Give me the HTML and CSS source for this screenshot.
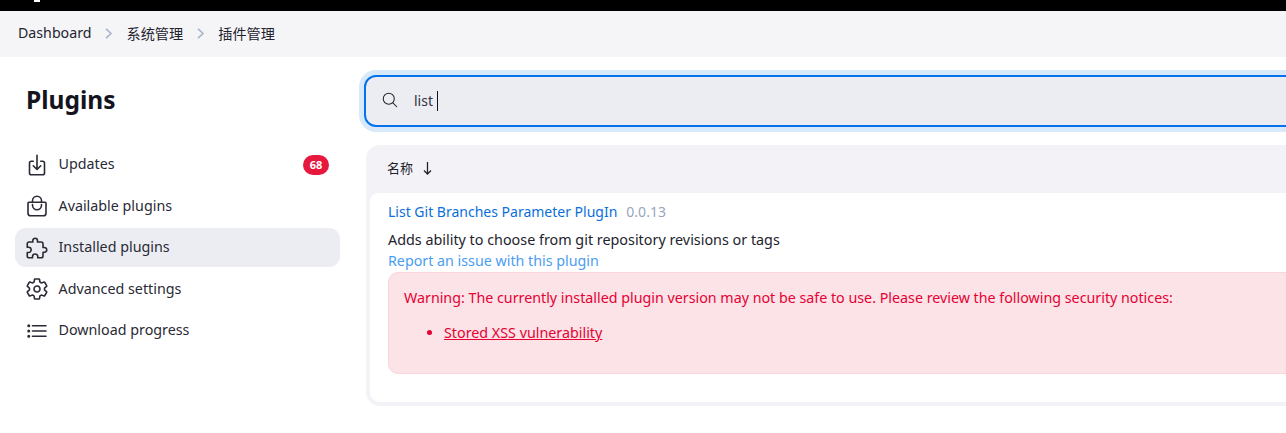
FILE: index.html
```html
<!DOCTYPE html>
<html lang="en">
<head>
<meta charset="utf-8">
<title>Plugins</title>
<link rel="stylesheet" href="styles.css">
</head>
<body>
<header class="topbar"><span class="logo-tip"></span></header>
<nav class="crumbs">
  <a class="crumb">Dashboard</a>
  <svg class="chev" viewBox="0 0 7 11"><path d="M1 .8 6 5.500 1 10.200"/></svg>
  <a class="crumb">系统管理</a>
  <svg class="chev" viewBox="0 0 7 11"><path d="M1 .8 6 5.500 1 10.200"/></svg>
  <a class="crumb">插件管理</a>
</nav>
<div class="page">
  <aside class="side">
    <h1 class="title">Plugins</h1>
    <ul class="menu">
      <li class="item">
        <svg class="ico" viewBox="0 0 512 512"><path d="M336 176h40a40 40 0 0140 40v208a40 40 0 01-40 40H136a40 40 0 01-40-40V216a40 40 0 0140-40h40"/><path d="M176 272l80 80 80-80M256 48v288"/></svg>
        <span class="label">Updates</span><b class="badge">68</b>
      </li>
      <li class="item">
        <svg class="ico" viewBox="0 0 512 512"><path d="M80 176a16 16 0 00-16 16v216c0 30.240 25.760 56 56 56h272c30.240 0 56-24.510 56-54.750V192a16 16 0 00-16-16zM160 176v-32a96 96 0 0196-96h0a96 96 0 0196 96v32"/><path d="M160 224v16a96 96 0 0096 96h0a96 96 0 0096-96v-16"/></svg>
        <span class="label">Available plugins</span>
      </li>
      <li class="item active">
        <svg class="ico" viewBox="0 0 512 512"><path d="M413.660 246.100H386a2 2 0 01-2-2v-77.240A38.860 38.860 0 00345.140 128H267.900a2 2 0 01-2-2V98.340c0-27.140-21.500-49.860-48.640-50.330a49.530 49.530 0 00-50.400 49.510V126a2 2 0 01-2 2H87.620A39.740 39.740 0 0048 167.620V238a2 2 0 002 2h26.910c29.370 0 53.680 25.480 54.090 54.850.42 29.870-23.510 57.150-53.290 57.150H50a2 2 0 00-2 2v70.380A39.740 39.740 0 0087.620 464H158a2 2 0 002-2v-20.930c0-30.280 24.750-56.350 55-57.060 30.100-.7 57 20.310 57 50.280V462a2 2 0 002 2h71.140A38.860 38.860 0 00384 425.140v-78a2 2 0 012-2h28.480c27.630 0 49.520-22.670 49.520-50.400s-23.200-48.640-50.340-48.640z"/></svg>
        <span class="label">Installed plugins</span>
      </li>
      <li class="item">
        <svg class="ico" viewBox="0 0 512 512"><path d="M262.290 192.310a64 64 0 1057.400 57.400 64.130 64.130 0 00-57.400-57.400zM416.390 256a154.340 154.340 0 01-1.530 20.790l45.210 35.460a10.810 10.810 0 012.450 13.750l-42.770 74a10.810 10.810 0 01-13.140 4.590l-44.900-18.080a16.110 16.110 0 00-15.170 1.750A164.480 164.480 0 01325 400.800a15.940 15.940 0 00-8.820 12.140l-6.730 47.890a11.080 11.080 0 01-10.680 9.170h-85.540a11.110 11.110 0 01-10.690-8.870l-6.720-47.820a16.070 16.070 0 00-9-12.220 155.300 155.300 0 01-21.460-12.570 16 16 0 00-15.110-1.710l-44.890 18.070a10.810 10.810 0 01-13.140-4.580l-42.770-74a10.800 10.800 0 012.450-13.750l38.210-30a16.050 16.050 0 006-14.080c-.36-4.170-.58-8.330-.58-12.500s.21-8.270.58-12.350a16 16 0 00-6.070-13.940l-38.190-30A10.810 10.810 0 0149.480 186l42.770-74a10.810 10.810 0 0113.140-4.590l44.900 18.080a16.110 16.110 0 0015.170-1.750A164.480 164.480 0 01187 111.200a15.940 15.940 0 008.820-12.140l6.730-47.890A11.080 11.080 0 01213.230 42h85.540a11.110 11.110 0 0110.690 8.870l6.720 47.820a16.070 16.070 0 009 12.220 155.300 155.300 0 0121.460 12.570 16 16 0 0015.110 1.710l44.890-18.070a10.810 10.810 0 0113.140 4.580l42.770 74a10.800 10.800 0 01-2.450 13.750l-38.210 30a16.050 16.050 0 00-6.050 14.080c.33 4.140.55 8.300.55 12.470z"/></svg>
        <span class="label">Advanced settings</span>
      </li>
      <li class="item">
        <svg class="ico" viewBox="0 0 512 512"><path d="M160 144h288M160 256h288M160 368h288"/><circle class="dot" cx="80" cy="144" r="16"/><circle class="dot" cx="80" cy="256" r="16"/><circle class="dot" cx="80" cy="368" r="16"/></svg>
        <span class="label">Download progress</span>
      </li>
    </ul>
  </aside>
  <main class="main">
    <div class="search">
      <svg class="search-ico" viewBox="0 0 512 512"><path d="M221.090 64a157.090 157.090 0 10157.090 157.090A157.100 157.100 0 00221.090 64z"/><path d="M338.290 338.290L448 448"/></svg>
      <span class="search-text">list</span><span class="caret"></span>
    </div>
    <section class="table">
      <div class="thead"><span>名称</span><svg class="arrow" viewBox="0 0 9 14"><path d="M4.500 1v12M1 9.500l3.500 3.500L8 9.500"/></svg></div>
      <div class="row">
        <div class="name-line"><a class="name">List Git Branches Parameter PlugIn</a><span class="ver">0.0.13</span></div>
        <p class="desc">Adds ability to choose from git repository revisions or tags</p>
        <a class="report">Report an issue with this plugin</a>
        <div class="warn">
          <p class="warn-text">Warning: The currently installed plugin version may not be safe to use. Please review the following security notices:</p>
          <ul class="warn-list"><li><a class="warn-link">Stored XSS vulnerability</a></li></ul>
        </div>
      </div>
    </section>
  </main>
</div>
</body>
</html>
```
FILE: styles.css
```css
* { box-sizing: border-box; }
html, body { margin: 0; padding: 0; height: 433px; overflow: hidden; background: #fff; }
body { font-family: "Noto Sans", "Noto Sans CJK SC", sans-serif; font-size: 14.3px; color: #14141f; }
.topbar { height: 11px; background: #000; position: relative; }
.logo-tip { position: absolute; left: 34px; top: 0; width: 6px; height: 2px; background: #fff; }
.crumbs { height: 46px; background: #f5f5f8; display: flex; align-items: center; padding: 0 0 3px 18px; }
.crumb { font-size: 14.200px; color: #23232e; }
.chev { width: 7px; height: 11px; margin: 2px 14px 0 14px; fill: none; stroke: #a9b6cb; stroke-width: 1.700; }
.page { display: flex; width: 1500px; }
.side { width: 325px; flex: none; margin-left: 15px; }
.title { margin: 26px 0 0 11px; font-size: 24.500px; line-height: 33px; font-weight: 700; color: #14141f; }
.menu { list-style: none; margin: 29px 0 0; padding: 0; display: flex; flex-direction: column; gap: 2.500px; }
.item { height: 39px; display: flex; align-items: center; padding-left: 10px; padding-right: 11px; border-radius: 11px; color: #2a2a36; }
.item.active { background: #ecedf3; }
.label { position: relative; top: -1px; }
.ico { width: 24px; height: 24px; margin-right: 9.500px; flex: none; fill: none; stroke: #2a2a36; stroke-width: 34; stroke-linecap: round; stroke-linejoin: round; }
.dot { stroke-width: 32; }
.badge { margin-left: auto; height: 20px; min-width: 26px; border-radius: 10px; background: #e6183d; color: #fff; font-size: 11px; font-weight: 700; text-align: center; line-height: 20px; }
.main { margin-left: 24px; flex: none; width: 1100px; padding-top: 18px; }
.search { height: 52px; display: flex; align-items: center; padding: 0 0 2px 15px; border: 2px solid #0472ec; border-radius: 12px; background: #ecedf3; box-shadow: 0 0 0 5px #d8e9fa; }
.search-ico { width: 18px; height: 18px; fill: none; stroke: #23232e; stroke-width: 30; stroke-linecap: round; margin-right: 15px; }
.search-text { color: #33333f; font-size: 14px; }
.caret { width: 1px; height: 20px; background: #14141f; margin: 2px 0 0 4px; }
.table { margin: 18px 0 0 2px; background: #f3f3f7; border-radius: 14px; padding: 0 4px 4px; }
.thead { height: 48px; display: flex; align-items: center; gap: 10px; padding: 0 0 3px 17px; font-size: 13px; color: #23232e; }
.arrow { width: 9px; height: 14px; fill: none; stroke: #23232e; stroke-width: 1.300; }
.row { height: 209px; background: #fff; border-radius: 8px 0 0 10px; padding: 8px 0 0 18px; }
.name-line { display: flex; align-items: baseline; gap: 9px; line-height: 22px; }
.name { color: #0a6fdc; font-size: 14px; }
.ver { color: #97a6bc; font-size: 14px; }
.desc { margin: 6px 0 0; line-height: 21px; color: #23232e; font-size: 14.350px; }
.report { display: block; line-height: 21px; color: #4b9df2; font-size: 14.270px; }
.warn { margin-top: 1px; height: 102px; border: 1px solid #fbd5dc; border-radius: 10px; background: #fbe3e7; color: #e60033; padding: 14px 15px; }
.warn-text { margin: 0; line-height: 22px; font-size: 14.280px; }
.warn-list { margin: 13px 0 0; padding-left: 40px; line-height: 22px; }
.warn-link { text-decoration: underline; }
```
